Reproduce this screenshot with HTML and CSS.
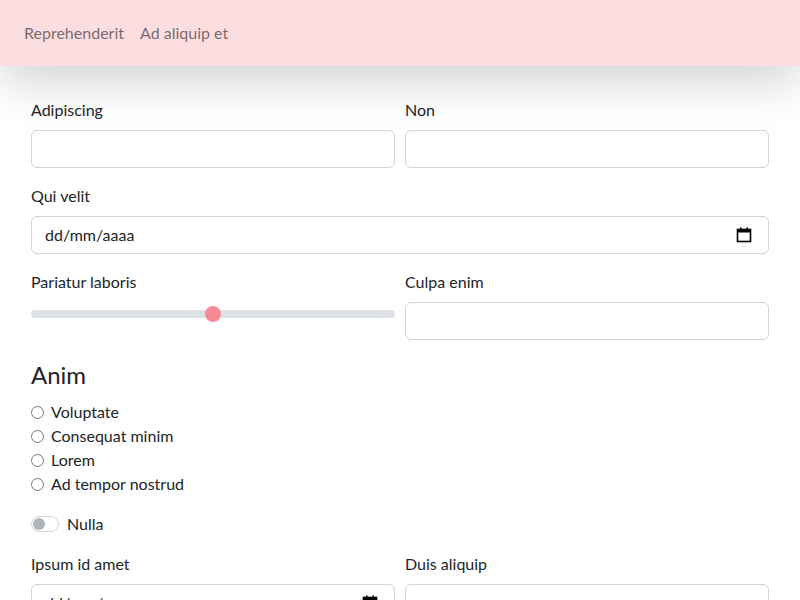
FILE: index.html
```html
<!DOCTYPE html>
<html lang="pt">
<head>
<meta charset="utf-8">
<link rel="stylesheet" href="styles.css">
</head>
<body>
<nav class="navbar">
  <a class="nav-link">Reprehenderit</a>
  <a class="nav-link">Ad aliquip et</a>
</nav>
<main class="container">
  <div class="row">
    <div class="field">
      <label class="label">Adipiscing</label>
      <div class="input"></div>
    </div>
    <div class="field">
      <label class="label">Non</label>
      <div class="input"></div>
    </div>
  </div>
  <div class="field">
    <label class="label">Qui velit</label>
    <div class="input date"><span>dd/mm/aaaa</span>
      <svg class="cal" width="16" height="16" viewBox="0 0 16 16"><rect x="1.5" y="2.5" width="13" height="12" fill="none" stroke="#000" stroke-width="1.6"/><rect x="1.5" y="2.5" width="13" height="3" fill="#000"/><rect x="4" y="0.5" width="1.6" height="3" fill="#000"/><rect x="10.4" y="0.5" width="1.6" height="3" fill="#000"/></svg>
    </div>
  </div>
  <div class="row">
    <div class="field">
      <label class="label">Pariatur laboris</label>
      <div class="range"><div class="track"></div><div class="thumb"></div></div>
    </div>
    <div class="field">
      <label class="label">Culpa enim</label>
      <div class="input"></div>
    </div>
  </div>
  <h4 class="heading">Anim</h4>
  <div class="radios">
    <div class="radio"><span class="dot"></span>Voluptate</div>
    <div class="radio"><span class="dot"></span>Consequat minim</div>
    <div class="radio"><span class="dot"></span>Lorem</div>
    <div class="radio"><span class="dot"></span>Ad tempor nostrud</div>
  </div>
  <div class="switch-row"><span class="switch"><span class="knob"></span></span>Nulla</div>
  <div class="row">
    <div class="field">
      <label class="label">Ipsum id amet</label>
      <div class="input date"><span>dd/mm/aaaa</span>
        <svg class="cal" width="16" height="16" viewBox="0 0 16 16"><rect x="1.5" y="2.5" width="13" height="12" fill="none" stroke="#000" stroke-width="1.6"/><rect x="1.5" y="2.5" width="13" height="3" fill="#000"/><rect x="4" y="0.5" width="1.6" height="3" fill="#000"/><rect x="10.4" y="0.5" width="1.6" height="3" fill="#000"/></svg>
      </div>
    </div>
    <div class="field">
      <label class="label">Duis aliquip</label>
      <div class="input"></div>
    </div>
  </div>
</main>
</body>
</html>
```
FILE: styles.css
```css
html, body { margin: 0; padding: 0; }
body {
  font-family: Lato, "Noto Sans", sans-serif;
  font-size: 16px;
  line-height: 24px;
  color: #212529;
  background: #fff;
  overflow: hidden;
}
.navbar {
  position: relative;
  z-index: 2;
  height: 66px;
  box-sizing: border-box;
  padding: 0 16px;
  display: flex;
  align-items: center;
  background: #fcdde0;
  box-shadow: 0 16px 48px rgba(0,0,0,0.175);
}
.nav-link {
  padding: 8px 8px;
  color: rgba(0,0,0,0.55);
  text-decoration: none;
}
.container {
  padding: 32px 31px 0;
  position: relative;
}
.row {
  display: grid;
  grid-template-columns: 1fr 1fr;
  column-gap: 10px;
}
.field { margin-bottom: 16px; }
.label { display: block; margin-bottom: 8px; }
.input {
  height: 38px;
  box-sizing: border-box;
  border: 1px solid #ced4da;
  border-radius: 6px;
  background: #fff;
}
.date {
  display: flex;
  align-items: center;
  justify-content: space-between;
  padding: 0 16px 0 13px;
  color: #212529;
}
.cal { display: block; }
.range {
  position: relative;
  height: 24px;
  display: flex;
  align-items: center;
}
.track {
  flex: 1;
  height: 8px;
  border-radius: 4px;
  background: #dee2e6;
}
.thumb {
  position: absolute;
  left: calc(50% - 8px);
  top: 4px;
  width: 16px;
  height: 16px;
  border-radius: 50%;
  background: #f28b96;
}
.heading {
  margin: 4px 0 11px;
  font-size: 24px;
  font-weight: 400;
  line-height: 29px;
}
.radios { margin-bottom: 16px; }
.radio {
  display: flex;
  align-items: center;
  height: 24px;
}
.dot {
  width: 11px;
  height: 11px;
  border: 1px solid #767676;
  border-radius: 50%;
  margin: 0 7px 0 0;
  box-sizing: content-box;
}
.switch-row {
  display: flex;
  align-items: center;
  height: 24px;
  margin-bottom: 16px;
}
.switch {
  position: relative;
  width: 26px;
  height: 14px;
  border: 1px solid #ced4da;
  border-radius: 8px;
  margin-right: 8px;
  box-sizing: content-box;
}
.knob {
  position: absolute;
  left: 1px;
  top: 1px;
  width: 12px;
  height: 12px;
  border-radius: 50%;
  background: #adb5bd;
}
```
